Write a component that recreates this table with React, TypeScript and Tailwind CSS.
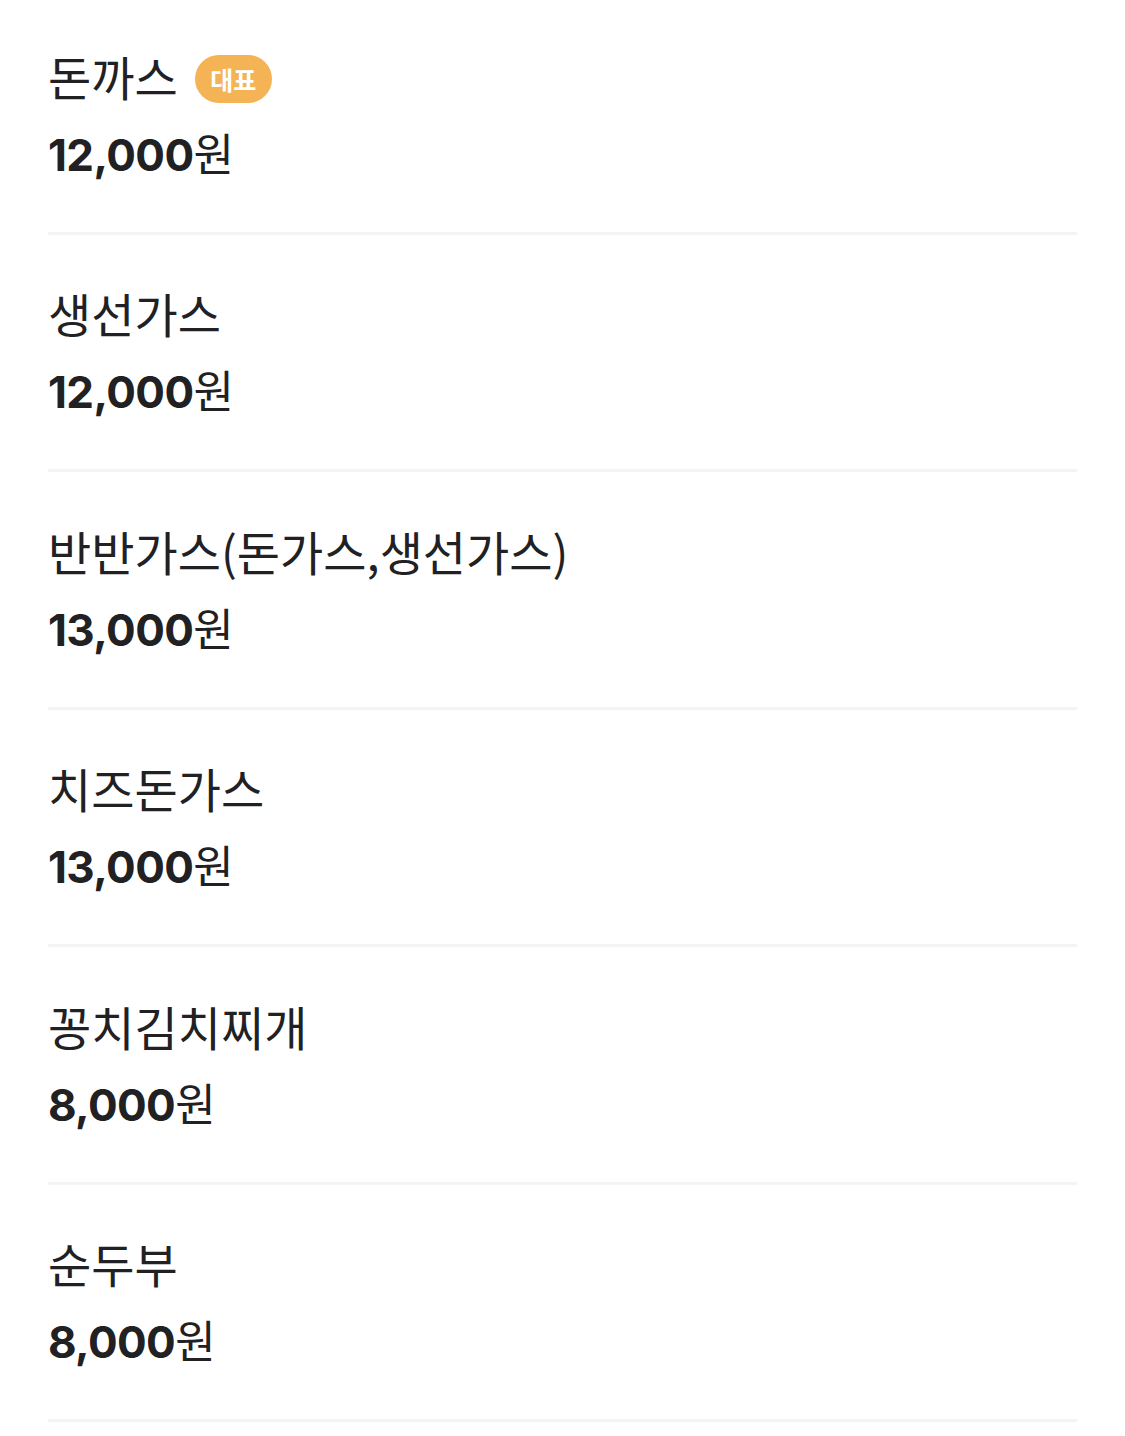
import React from "react";

const items: { name: string; price: string; badge?: boolean }[] = [
  { name: "돈까스", price: "12,000", badge: true },
  { name: "생선가스", price: "12,000" },
  { name: "반반가스(돈가스,생선가스)", price: "13,000" },
  { name: "치즈돈가스", price: "13,000" },
  { name: "꽁치김치찌개", price: "8,000" },
  { name: "순두부", price: "8,000" },
];

export default function App() {
  return (
    <div className="min-h-[1436px] bg-white px-[48px] text-[#212124]">
      {items.map((it) => (
        <div
          key={it.name}
          className="flex flex-col border-b-[3px] border-[#f4f4f5] pt-[48.4px] pb-[50px] first:pt-[46px]"
        >
          <div className="flex h-[60px] items-center gap-[17px]">
            <span
              className="text-[47px] leading-[60px]"
              style={{ fontFamily: '"Noto Sans CJK KR", sans-serif' }}
            >
              {it.name}
            </span>
            {it.badge && (
              <span
                className="mt-[6px] flex h-[48px] w-[77px] items-center justify-center rounded-full bg-[#f4b455] text-[25px] font-semibold leading-none text-white"
                style={{ fontFamily: '"Noto Sans CJK KR", sans-serif' }}
              >
                대표
              </span>
            )}
          </div>
          <div className="mt-[16px] flex h-[60px] items-baseline text-[44px] leading-[60px]">
            <span
              className="font-bold tracking-[-0.6px]"
              style={{ fontFamily: "Inter, sans-serif" }}
            >
              {it.price}
            </span>
            <span
              className="font-normal"
              style={{ fontFamily: '"Noto Sans CJK KR", sans-serif' }}
            >
              원
            </span>
          </div>
        </div>
      ))}
    </div>
  );
}
